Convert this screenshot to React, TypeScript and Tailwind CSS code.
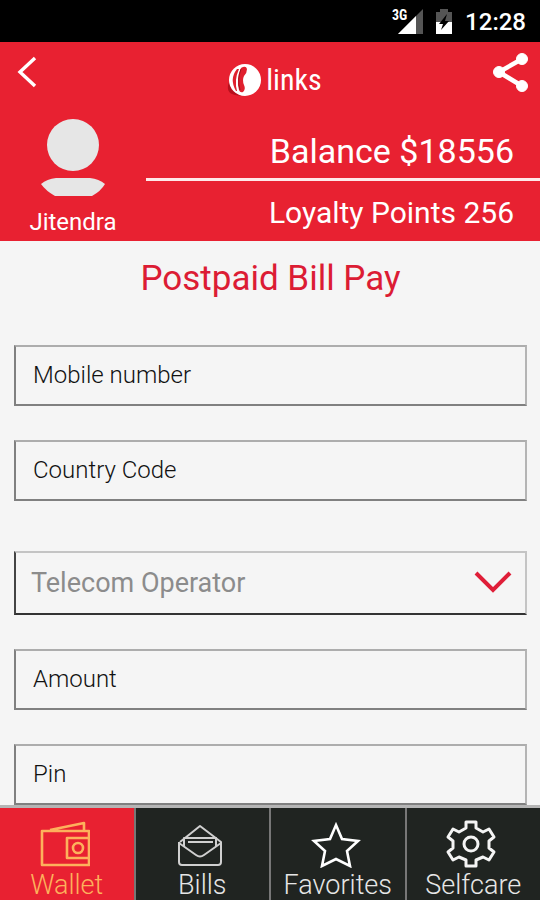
import type { ReactNode } from 'react';

/**
 * Postpaid bill payment screen.
 *
 *   • Status bar + account header (balance, loyalty points).
 *   • Payment form.
 *   • Bottom tab bar.
 */

export default function App() {
  return (
    <div className="flex min-h-screen flex-col bg-[#f5f5f5] font-['Roboto',sans-serif]">
      <StatusBar />
      <Header name="Jitendra" balance="$18556" points={256} />
      <main className="flex-1 pt-3.5 pr-[13px] pl-3.5">
        <h1 className="text-center text-[35px] leading-12 text-[#dc1c34]">Postpaid Bill Pay</h1>
        <form className="mt-[42px] flex flex-col gap-[34px]">
          <Field label="Mobile number" type="tel" />
          <Field label="Country Code" type="text" />
          <OperatorSelect />
          <Field label="Amount" type="text" />
          <Field label="Pin" type="password" />
        </form>
      </main>
      <TabBar />
    </div>
  );
}

function StatusBar() {
  return (
    <div className="flex h-[42px] items-center justify-end bg-black pt-0.5 pr-3.5 text-white">
      <svg className="h-7 w-8" viewBox="0 0 32 28" aria-hidden="true">
        <path d="M32 1V26H7Z" fill="#555" />
        <path d="M25 8V26H7Z" fill="#fff" />
        <text
          x="1"
          y="12"
          fontSize="14"
          fontWeight="700"
          fill="#fff"
          className="font-['Roboto_Condensed','Roboto',sans-serif]"
        >
          3G
        </text>
      </svg>
      <svg className="ml-3 h-7 w-[18px]" viewBox="0 0 18 28" aria-hidden="true">
        <path d="M1 4H5V1H13V4H17V15H1Z" fill="#555" />
        <path d="M1 14H17V26H1Z" fill="#fff" />
        <path d="M12 6L4 16H8L6 22L14 13H10Z" fill="#000" />
      </svg>
      <span className="ml-3 text-2xl font-medium">12:28</span>
    </div>
  );
}

function Header({ name, balance, points }: { name: string; balance: string; points: number }) {
  return (
    <header className="bg-[#e82131] text-white">
      <div className="flex h-[66px] items-start justify-between px-3 pt-2">
        <button type="button" aria-label="Back" className="pt-1">
          <svg className="h-9 w-8" viewBox="0 0 32 36" fill="none" stroke="#fff" strokeWidth="3.4">
            <path d="M23 4L8 18L23 32" />
          </svg>
        </button>
        <Logo />
        <button type="button" aria-label="Share">
          <svg className="h-11 w-9" viewBox="0 0 36 44" fill="#fff" stroke="#fff">
            <path d="M30 9L7 22L30 36" fill="none" strokeWidth="4.6" />
            <circle cx="30" cy="9" r="5.5" />
            <circle cx="7" cy="22" r="5.5" />
            <circle cx="30" cy="36" r="5.5" />
          </svg>
        </button>
      </div>
      <div className="flex">
        <div className="flex w-[146px] flex-col items-center pt-[10px]">
          <svg className="h-20 w-16" viewBox="0 0 64 80" fill="#e6e6e6" aria-hidden="true">
            <circle cx="32" cy="27" r="26" />
            <path d="M0 66Q6 61 15 60H49Q58 61 64 66Q60 73 51 78H14Q5 73 0 66Z" />
          </svg>
          <span className="mt-2 text-2xl">{name}</span>
        </div>
        <div className="flex-1 text-right">
          <div className="border-b-3 border-[#ffe9e9] pt-4 pr-[26px] text-[34px] leading-[54px]">
            Balance {balance}
          </div>
          <div className="pt-1 pr-[26px] text-[30px] leading-14">Loyalty Points {points}</div>
        </div>
      </div>
    </header>
  );
}

function Logo() {
  return (
    <div className="flex items-center gap-1 pt-2.5 pl-2">
      <svg className="h-10 w-10" viewBox="0 0 40 40" aria-hidden="true">
        <path d="M7 22Q3 33 13 35Q22 37 29 33Z" fill="#b8101d" />
        <circle cx="23" cy="20" r="16" fill="#fff" />
        <path d="M15 9Q7 19 14 31L15 31Q12 20 17 9Z" fill="#e0202e" />
        <path d="M19 8Q24 5 25 9Q25 13 22 16Q20 20 22 25Q24 29 21 32Q18 33 17 30Q14 19 19 8Z" fill="#e0202e" />
        <path d="M19 9Q15 19 18 30" fill="none" stroke="#9d1520" strokeWidth="1" />
      </svg>
      <span className="font-['Roboto_Condensed','Roboto',sans-serif] text-[30px] leading-10">links</span>
    </div>
  );
}

function Field({ label, type }: { label: string; type: string }) {
  return (
    <input
      type={type}
      aria-label={label}
      placeholder={label}
      className="h-[61px] w-full border-2 border-t-[#adadad] border-r-[#b4b4b4] border-b-[#808080] border-l-[#808080] px-[17px] pb-0.5 text-2xl font-light text-[#111] placeholder:text-[#111] placeholder:opacity-100"
    />
  );
}

function OperatorSelect() {
  return (
    <div className="relative mt-4">
      <select
        aria-label="Telecom Operator"
        className="block h-16 w-full appearance-none border-2 border-t-[#c4c4c4] border-r-[#c4c4c4] border-b-[#333] border-l-[#444] bg-transparent px-[15px] text-[27px] text-[#8c8c8c]"
      >
        <option>Telecom Operator</option>
      </select>
      <svg
        className="pointer-events-none absolute top-4 right-3.5 h-8 w-10"
        viewBox="0 0 40 32"
        fill="none"
        stroke="#df1e38"
        strokeWidth="4"
        aria-hidden="true"
      >
        <path d="M3 6L20 23L37 6" />
      </svg>
    </div>
  );
}

function TabBar() {
  return (
    <nav className="flex border-t-3 border-[#b5b5b5]">
      <Tab label="Wallet" active>
        <g stroke="#fdb15c" strokeWidth="2.6">
          <path d="M2 13H49V47H2ZM10 12L44 5V12M49 20H27V40H49" />
          <circle cx="38" cy="30" r="5" />
        </g>
      </Tab>
      <Tab label="Bills">
        <g stroke="#d0d0d0" strokeWidth="2">
          <path d="M5 24L25 8L46 24V44Q46 47 43 47H7Q4 47 4 44V24" />
          <path d="M4 25L21 37Q25 40 29 37L46 25M9 28V20H41V28M13 24H38" />
        </g>
      </Tab>
      <Tab label="Favorites">
        <path
          d="M25 7L31 21L47 23L36 33L39 48L25 41L11 48L14 33L3 23L19 21Z"
          stroke="#fff"
          strokeWidth="2.6"
          strokeLinejoin="miter"
        />
      </Tab>
      <Tab label="Selfcare">
        <g stroke="#f4f4f4" strokeWidth="3">
          <path d="M20 4H30V10L37 14L43 11L48 19L43 23V30L48 34L43 42L37 39L30 42V48H20V42L13 39L7 42L2 34L7 30V23L2 19L7 11L13 14L20 10Z" />
          <circle cx="25" cy="26" r="7" />
        </g>
      </Tab>
    </nav>
  );
}

function Tab({ label, active = false, children }: { label: string; active?: boolean; children: ReactNode }) {
  return (
    <a
      href="#"
      className={`flex h-[93px] flex-1 flex-col items-center border-r-2 border-[#777] pt-[10px] text-[27px] leading-[30px] font-light last:border-r-0 ${
        active ? 'bg-[#e82131] text-[#fdb15c]' : 'bg-[#202421] text-[#e6e6e6]'
      }`}
    >
      <svg
        className="mr-1 mb-0.5 h-[50px] w-[50px]"
        viewBox="0 0 50 50"
        fill="none"
        strokeLinejoin="round"
        aria-hidden="true"
      >
        {children}
      </svg>
      <span>{label}</span>
    </a>
  );
}
